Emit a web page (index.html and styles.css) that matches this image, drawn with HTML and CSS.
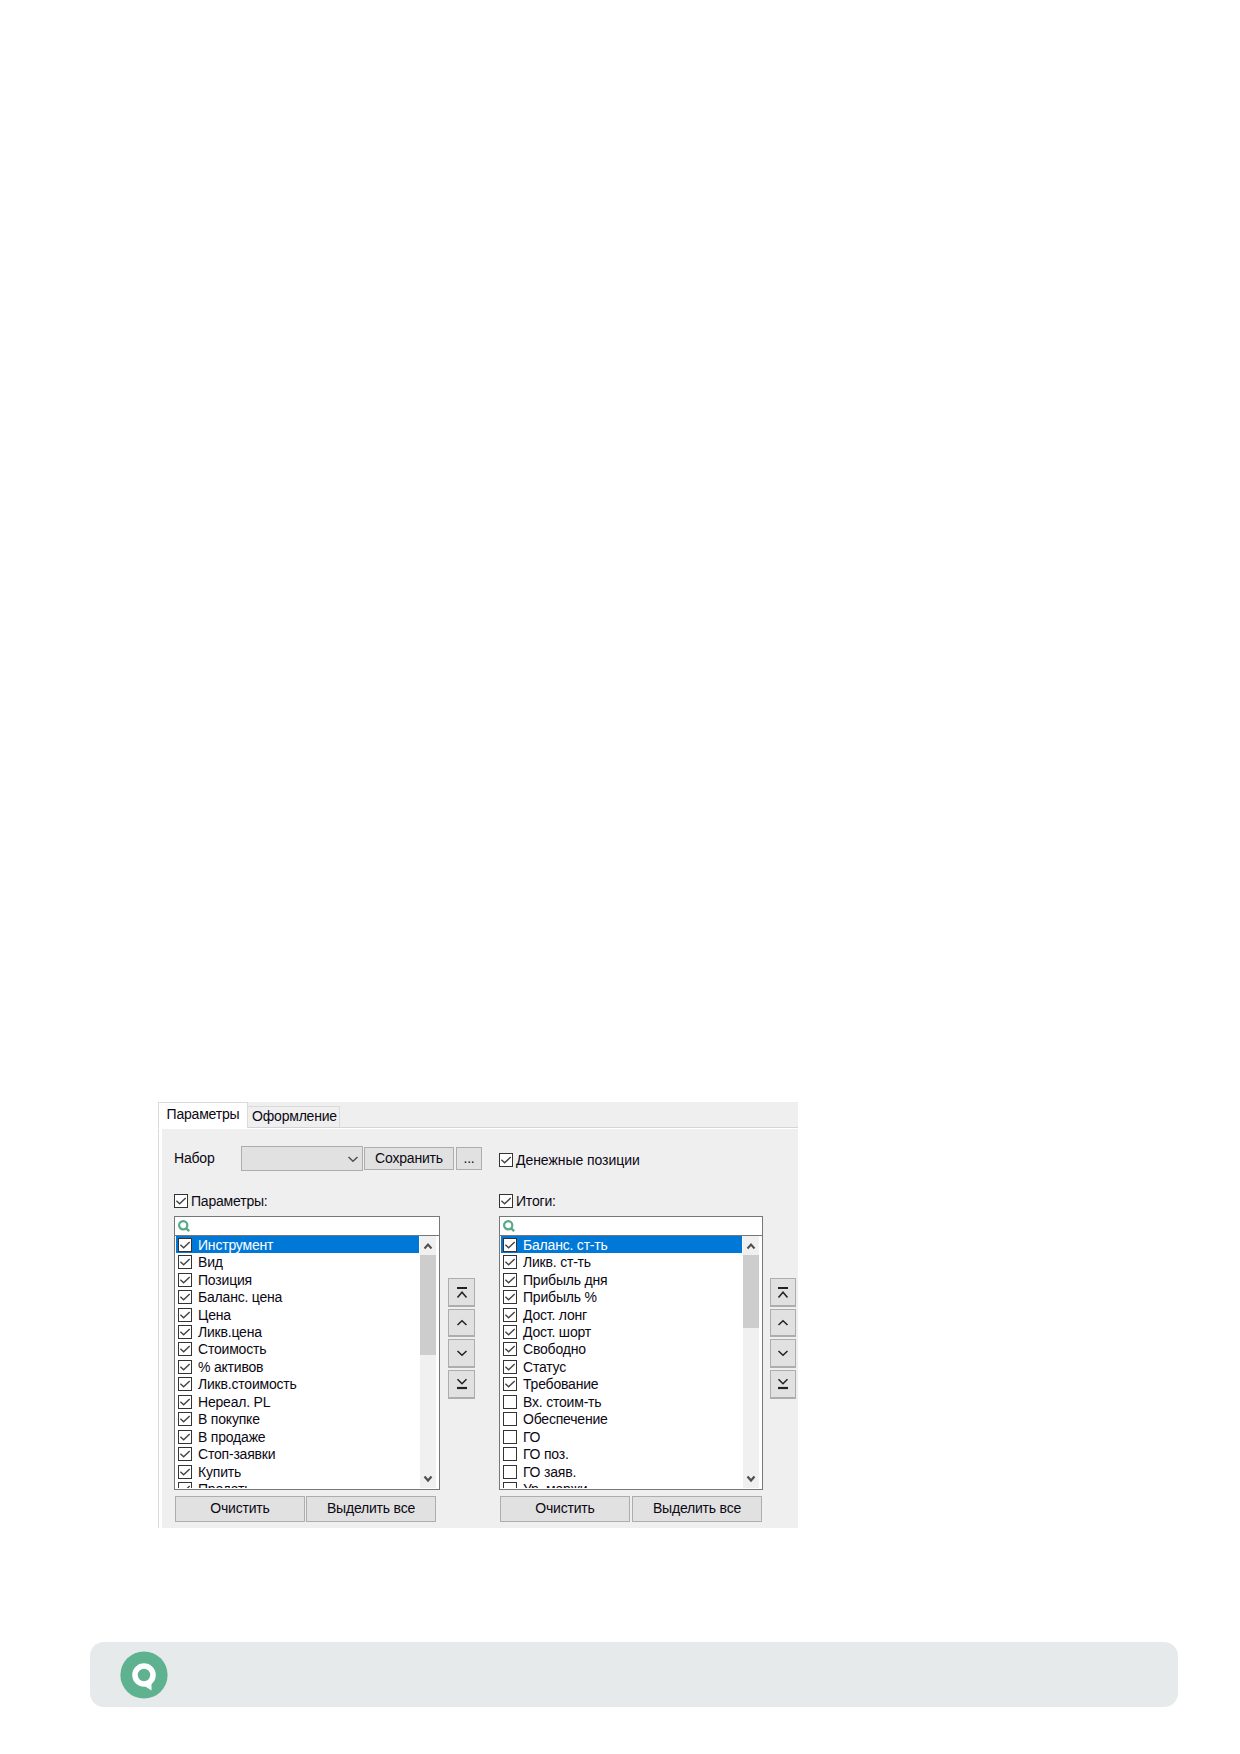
FILE: index.html
```
<!DOCTYPE html>
<html lang="ru">
<head>
<meta charset="utf-8">
<title>Параметры</title>
<link rel="stylesheet" href="styles.css">
</head>
<body>
<svg class="defs" width="0" height="0">
  <symbol id="on" viewBox="0 0 14 14"><rect x=".5" y=".5" width="13" height="13" fill="#fff" stroke="#333"/><path d="M2.4 6.8 5.6 9.8 11.7 4" fill="none" stroke="#444" stroke-width="1.4"/></symbol>
  <symbol id="off" viewBox="0 0 14 14"><rect x=".5" y=".5" width="13" height="13" fill="#fff" stroke="#333"/></symbol>
  <symbol id="find" viewBox="0 0 12 12"><circle cx="5.2" cy="5.2" r="4.1" fill="none" stroke="#58aa87" stroke-width="2.2"/><path d="M7.7 7.9 11.2 11.2" stroke="#58aa87" stroke-width="2.4"/></symbol>
  <symbol id="up" viewBox="0 0 12 12"><path d="M1.5 8 6 3.8 10.5 8" fill="none" stroke="#222" stroke-width="1.5"/></symbol>
  <symbol id="down" viewBox="0 0 12 12"><path d="M1.5 4 6 8.2 10.5 4" fill="none" stroke="#222" stroke-width="1.5"/></symbol>
  <symbol id="top" viewBox="0 0 12 12"><path d="M1 2H11" stroke="#222" stroke-width="2"/><path d="M1.5 11.5 6 6.2 10.5 11.5" fill="none" stroke="#222" stroke-width="1.5"/></symbol>
  <symbol id="bottom" viewBox="0 0 12 12"><path d="M1.5 1.2 6 5.8 10.5 1.2" fill="none" stroke="#222" stroke-width="1.5"/><path d="M1 10H11" stroke="#222" stroke-width="2.2"/></symbol>
  <symbol id="scrollup" viewBox="0 0 10 8"><path d="M1.5 6.5 5 2.5 8.5 6.5" fill="none" stroke="#505050" stroke-width="2"/></symbol>
  <symbol id="scrolldown" viewBox="0 0 10 8"><path d="M1.5 1.5 5 5.5 8.5 1.5" fill="none" stroke="#505050" stroke-width="2.2"/></symbol>
</svg>
<main class="window">
  <nav class="tabs"><span class="tab active">Параметры</span><span class="tab idle">Оформление</span></nav>
  <div class="panel">
    <div class="toolbar">
      <span class="set-label">Набор</span>
      <span class="select"><svg class="arrow"><use href="#down"/></svg></span>
      <span class="button save">Сохранить</span>
      <span class="button more">...</span>
      <span class="check money"><svg><use href="#on"/></svg>Денежные позиции</span>
    </div>
    <div class="groups">
      <section class="group left">
        <div class="check title"><svg><use href="#on"/></svg>Параметры:</div>
        <div class="chooser">
          <div class="search"><svg><use href="#find"/></svg></div>
          <div class="list">
            <div class="rows">
              <div class="row selected"><svg><use href="#on"/></svg><span>Инструмент</span></div>
              <div class="row"><svg><use href="#on"/></svg><span>Вид</span></div>
              <div class="row"><svg><use href="#on"/></svg><span>Позиция</span></div>
              <div class="row"><svg><use href="#on"/></svg><span>Баланс. цена</span></div>
              <div class="row"><svg><use href="#on"/></svg><span>Цена</span></div>
              <div class="row"><svg><use href="#on"/></svg><span>Ликв.цена</span></div>
              <div class="row"><svg><use href="#on"/></svg><span>Стоимость</span></div>
              <div class="row"><svg><use href="#on"/></svg><span>% активов</span></div>
              <div class="row"><svg><use href="#on"/></svg><span>Ликв.стоимость</span></div>
              <div class="row"><svg><use href="#on"/></svg><span>Нереал. PL</span></div>
              <div class="row"><svg><use href="#on"/></svg><span>В покупке</span></div>
              <div class="row"><svg><use href="#on"/></svg><span>В продаже</span></div>
              <div class="row"><svg><use href="#on"/></svg><span>Стоп-заявки</span></div>
              <div class="row"><svg><use href="#on"/></svg><span>Купить</span></div>
              <div class="row"><svg><use href="#on"/></svg><span>Продать</span></div>
            </div>
            <div class="scrollbar"><svg><use href="#scrollup"/></svg><i class="thumb"></i><svg class="end"><use href="#scrolldown"/></svg></div>
          </div>
        </div>
        <div class="actions"><span class="button">Очистить</span><span class="button">Выделить все</span></div>
      </section>
      <div class="movers">
        <span class="button"><svg><use href="#top"/></svg></span><span class="button"><svg><use href="#up"/></svg></span><span class="button"><svg><use href="#down"/></svg></span><span class="button"><svg><use href="#bottom"/></svg></span>
      </div>
      <section class="group right">
        <div class="check title"><svg><use href="#on"/></svg>Итоги:</div>
        <div class="chooser">
          <div class="search"><svg><use href="#find"/></svg></div>
          <div class="list">
            <div class="rows">
              <div class="row selected"><svg><use href="#on"/></svg><span>Баланс. ст-ть</span></div>
              <div class="row"><svg><use href="#on"/></svg><span>Ликв. ст-ть</span></div>
              <div class="row"><svg><use href="#on"/></svg><span>Прибыль дня</span></div>
              <div class="row"><svg><use href="#on"/></svg><span>Прибыль %</span></div>
              <div class="row"><svg><use href="#on"/></svg><span>Дост. лонг</span></div>
              <div class="row"><svg><use href="#on"/></svg><span>Дост. шорт</span></div>
              <div class="row"><svg><use href="#on"/></svg><span>Свободно</span></div>
              <div class="row"><svg><use href="#on"/></svg><span>Статус</span></div>
              <div class="row"><svg><use href="#on"/></svg><span>Требование</span></div>
              <div class="row"><svg><use href="#off"/></svg><span>Вх. стоим-ть</span></div>
              <div class="row"><svg><use href="#off"/></svg><span>Обеспечение</span></div>
              <div class="row"><svg><use href="#off"/></svg><span>ГО</span></div>
              <div class="row"><svg><use href="#off"/></svg><span>ГО поз.</span></div>
              <div class="row"><svg><use href="#off"/></svg><span>ГО заяв.</span></div>
              <div class="row"><svg><use href="#off"/></svg><span>Ур. маржи</span></div>
            </div>
            <div class="scrollbar"><svg><use href="#scrollup"/></svg><i class="thumb short"></i><svg class="end"><use href="#scrolldown"/></svg></div>
          </div>
        </div>
        <div class="actions"><span class="button">Очистить</span><span class="button">Выделить все</span></div>
      </section>
      <div class="movers">
        <span class="button"><svg><use href="#top"/></svg></span><span class="button"><svg><use href="#up"/></svg></span><span class="button"><svg><use href="#down"/></svg></span><span class="button"><svg><use href="#bottom"/></svg></span>
      </div>
    </div>
  </div>
</main>
<footer class="footer">
  <svg class="logo" viewBox="0 0 48 48"><circle cx="24" cy="24" r="23.6" fill="#5fb28f"/><circle cx="24" cy="24" r="9" fill="none" stroke="#fff" stroke-width="5.6"/><path d="M23 34 31.5 39.5V31Z" fill="#fff"/></svg>
</footer>
</body>
</html>
```
FILE: styles.css
```
* { box-sizing: border-box; }
body {
  margin: 0;
  height: 1754px;
  padding: 1102px 62px 47px 90px;
  display: flex;
  flex-direction: column;
  justify-content: space-between;
  background: #fff;
  color: #0c0814;
  font: 14px/17px "Liberation Sans", Arial, sans-serif;
  letter-spacing: -.2px;
  white-space: nowrap;
}
svg { display: block; flex: none; width: 14px; height: 14px; }
.defs { display: none; }

.window { width: 640px; height: 426px; margin-left: 68px; background: #efefef; }
.tabs { display: flex; align-items: flex-end; height: 26px; border-bottom: 1px solid #d4d4d4; }
.tab { text-align: center; border: 1px solid #dadada; border-bottom: 0; }
.active { width: 90px; height: 26px; margin-bottom: -1px; padding-top: 3px; background: #fff; }
.idle { width: 92px; height: 21px; padding: 1px 0 0 2px; border-left: 0; }

.panel { height: 400px; border-left: 1px solid #dadada; border-top: 1px solid #fff; box-shadow: inset 3px 0 #fff; padding: 17px 0 0 15px; }
.toolbar { display: flex; height: 25px; align-items: center; }
.set-label { width: 67px; }
.select { display: flex; align-items: center; justify-content: flex-end; width: 122px; height: 25px; padding-right: 3px; background: #e1e1e1; border: 1px solid #adadad; }
.arrow { width: 12px; height: 12px; opacity: .75; }
.button { display: flex; align-items: center; justify-content: center; background: #e1e1e1; border: 1px solid #adadad; }
.save { width: 90px; height: 23px; margin-left: 1px; }
.more { width: 26px; height: 23px; margin-left: 2px; }
.check { display: flex; align-items: center; gap: 3px; }
.money { margin: 3px 0 0 17px; letter-spacing: -.05px; }

.groups { display: flex; padding-top: 23px; }
.group { display: flex; flex-direction: column; }
.left { width: 266px; }
.right { width: 264px; margin-left: 24px; }
.title { height: 14px; margin-bottom: 8px; }
.chooser { height: 274px; border: 1px solid #777; background: #fff; }
.search { height: 19px; padding: 3px 0 0 3px; border-bottom: 1px solid #777; }
.search svg { width: 12px; height: 12px; }
.list { display: flex; height: 253px; padding: 0 3px 1px 1px; overflow: hidden; }
.rows { flex: 1; height: 252px; overflow: hidden; }
.row { display: flex; align-items: center; gap: 6px; height: 17.46px; padding-left: 2px; }
.row span { padding-top: 1px; }
.selected { background: #0078d7; color: #fff; }
.scrollbar { display: flex; flex-direction: column; align-items: center; width: 16px; margin-left: 1px; background: #f0f0f0; }
.scrollbar svg { width: 10px; height: 8px; margin: 6px 0 5px; }
.scrollbar .end { margin-top: auto; }
.thumb { width: 16px; height: 100px; background: #cdcdcd; }
.short { height: 73px; }
.actions { display: flex; gap: 1px; padding: 6px 0 0 1px; }
.actions .button { width: 130px; height: 26px; padding-bottom: 1px; }
.right .actions { gap: 2px; }

.movers { display: flex; flex-direction: column; gap: 2px; padding-top: 84px; margin-left: 8px; }
.movers .button { width: 27px; height: 28.7px; border-bottom-width: 2px; }
.movers svg { width: 12px; height: 12px; }
.right + .movers { margin-left: 7px; }
.right + .movers .button { width: 26px; }

.footer { display: flex; align-items: center; height: 65px; width: 1088px; padding-left: 30px; background: #e6eaea; border-radius: 14px; }
.logo { width: 48px; height: 48px; }
```
